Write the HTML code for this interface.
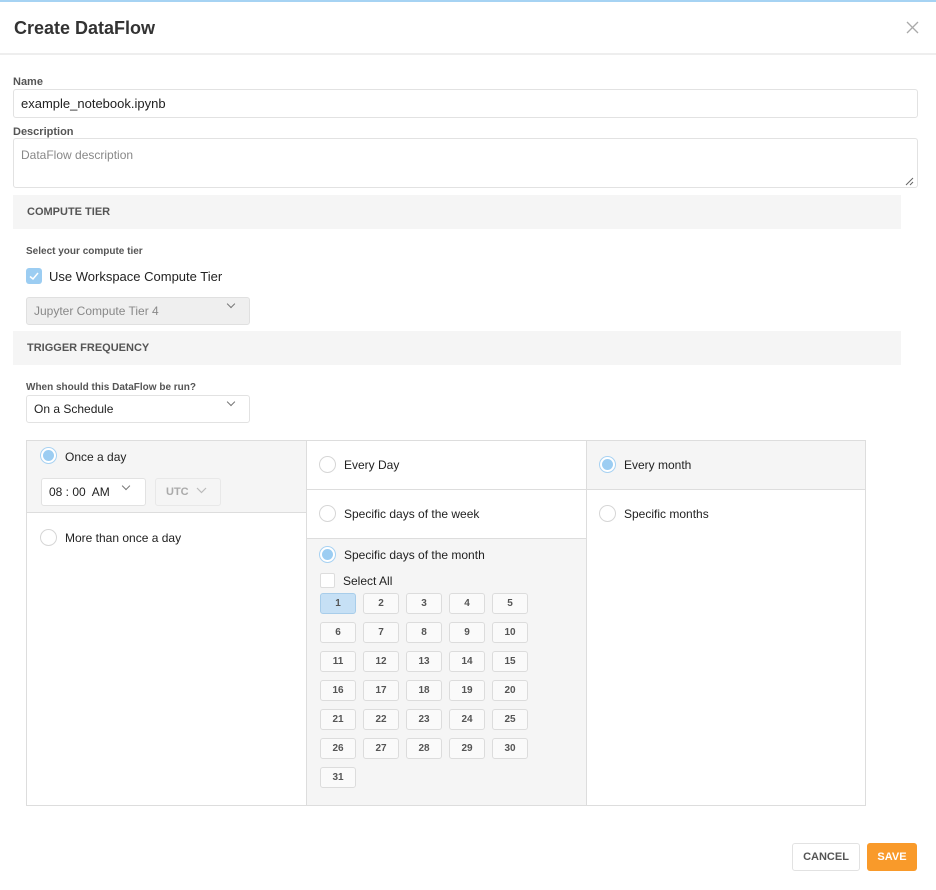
<!DOCTYPE html>
<html><head><meta charset="utf-8">
<style>
*{box-sizing:border-box;margin:0;padding:0}
body{width:936px;height:890px;background:#fff;font-family:"Liberation Sans",Arial,sans-serif;color:#222;position:relative;overflow:hidden}
.a{position:absolute}
.lbl{font-size:11px;font-weight:bold;color:#555}
.inp{border:1px solid #e2e2e2;border-radius:3px;background:#fff}
.sec{background:#f5f5f5;font-size:11px;font-weight:bold;color:#555;padding-left:14px;line-height:34px}
.t13{font-size:13px;color:#222}
.radio{width:17px;height:17px;border-radius:50%;border:1px solid #d6d6d6;background:#fff}
.radio.on{border-color:#a8d2f2}
.radio.on::after{content:"";position:absolute;left:2px;top:2px;width:11px;height:11px;border-radius:50%;background:#9ccdf2}
.chev{width:6px;height:6px;border-right:1px solid #777;border-bottom:1px solid #777;transform:rotate(45deg)}
.d{position:absolute;width:36px;height:21px;border:1px solid #dcdcdc;border-radius:3px;background:#fafafa;font-size:10px;font-weight:bold;color:#555;text-align:center;line-height:19px}
.d.on{background:#c6e0f5;border-color:#a8cdea}
</style></head><body>
<div class="a" style="left:0;top:0;width:936px;height:2px;background:#a6d3f3"></div>
<div class="a" style="left:14px;top:18px;font-size:18px;font-weight:bold;color:#333">Create DataFlow</div>
<svg class="a" style="left:906px;top:21px" width="13" height="13"><path d="M1 1L12 12M12 1L1 12" stroke="#aaa" stroke-width="1.3"/></svg>
<div class="a" style="left:0;top:53px;width:936px;height:2px;background:#eee"></div>

<div class="a lbl" style="left:13px;top:76px">Name</div>
<div class="a inp" style="left:13px;top:89px;width:905px;height:29px"></div>
<div class="a t13" style="left:21px;top:96px">example_notebook.ipynb</div>
<div class="a lbl" style="left:13px;top:126px">Description</div>
<div class="a inp" style="left:13px;top:138px;width:905px;height:50px"></div>
<div class="a" style="left:21px;top:148px;font-size:12px;color:#888">DataFlow description</div>
<svg class="a" style="left:904px;top:176px" width="10" height="10"><path d="M2 9L9 2M6 9L9 6" stroke="#666" stroke-width="1"/></svg>

<div class="a sec" style="left:13px;top:195px;width:888px;height:34px">COMPUTE TIER</div>
<div class="a lbl" style="left:26px;top:246px;font-size:10px">Select your compute tier</div>
<div class="a" style="left:26px;top:268px;width:16px;height:16px;border-radius:3px;background:#9ccdf2"></div>
<svg class="a" style="left:26px;top:268px" width="16" height="16"><path d="M4 8.5L7 11L12 5" stroke="#fff" stroke-width="1.5" fill="none"/></svg>
<div class="a t13" style="left:49px;top:269px">Use Workspace Compute Tier</div>
<div class="a" style="left:26px;top:297px;width:224px;height:28px;background:#efefef;border:1px solid #e0e0e0;border-radius:3px"></div>
<div class="a" style="left:34px;top:304px;font-size:12px;color:#888">Jupyter Compute Tier 4</div>
<div class="a chev" style="left:228px;top:301px"></div>

<div class="a sec" style="left:13px;top:331px;width:888px;height:34px">TRIGGER FREQUENCY</div>
<div class="a lbl" style="left:26px;top:382px;font-size:10px">When should this DataFlow be run?</div>
<div class="a inp" style="left:26px;top:395px;width:224px;height:28px"></div>
<div class="a" style="left:34px;top:402px;font-size:12px;color:#222">On a Schedule</div>
<div class="a chev" style="left:228px;top:399px"></div>

<div class="a" style="left:26px;top:440px;width:840px;height:366px;border:1px solid #ddd"></div>
<div class="a" style="left:27px;top:441px;width:279px;height:72px;background:#f5f5f5;border-bottom:1px solid #ddd"></div>
<div class="a" style="left:306px;top:440px;width:1px;height:366px;background:#ddd"></div>
<div class="a" style="left:586px;top:440px;width:1px;height:366px;background:#ddd"></div>
<div class="a" style="left:307px;top:489px;width:279px;height:1px;background:#ddd"></div>
<div class="a" style="left:307px;top:538px;width:279px;height:267px;background:#f5f5f5;border-top:1px solid #ddd"></div>
<div class="a" style="left:587px;top:441px;width:278px;height:49px;background:#f5f5f5;border-bottom:1px solid #ddd"></div>

<div class="a radio on" style="left:40px;top:447px"></div>
<div class="a t13" style="left:65px;top:450px;font-size:12px">Once a day</div>
<div class="a" style="left:41px;top:478px;width:105px;height:28px;background:#fff;border:1px solid #e2e2e2;border-radius:3px"></div>
<div class="a" style="left:49px;top:485px;font-size:12px">08 : 00&nbsp; AM</div>
<div class="a chev" style="left:123px;top:483px"></div>
<div class="a" style="left:155px;top:478px;width:66px;height:28px;border:1px solid #e8e8e8;border-radius:3px"></div>
<div class="a" style="left:166px;top:486px;font-size:11px;color:#aaa;font-weight:bold">UTC</div>
<svg class="a" style="left:196px;top:487px" width="11" height="7"><path d="M1 1L5.5 5.5L10 1" stroke="#bbb" stroke-width="1.2" fill="none"/></svg>
<div class="a radio" style="left:40px;top:529px"></div>
<div class="a t13" style="left:65px;top:531px;font-size:12px">More than once a day</div>

<div class="a radio" style="left:319px;top:456px"></div>
<div class="a t13" style="left:344px;top:458px;font-size:12px">Every Day</div>
<div class="a radio" style="left:319px;top:505px"></div>
<div class="a t13" style="left:344px;top:507px;font-size:12px">Specific days of the week</div>
<div class="a radio on" style="left:319px;top:546px"></div>
<div class="a t13" style="left:344px;top:548px;font-size:12px">Specific days of the month</div>
<div class="a" style="left:320px;top:573px;width:15px;height:15px;border:1px solid #ddd;background:#fff;border-radius:2px"></div>
<div class="a t13" style="left:343px;top:574px;font-size:12px">Select All</div>

<div class="a radio on" style="left:599px;top:456px"></div>
<div class="a t13" style="left:624px;top:458px;font-size:12px">Every month</div>
<div class="a radio" style="left:599px;top:505px"></div>
<div class="a t13" style="left:624px;top:507px;font-size:12px">Specific months</div>

<div class="d on" style="left:320px;top:593px">1</div><div class="d" style="left:363px;top:593px">2</div><div class="d" style="left:406px;top:593px">3</div><div class="d" style="left:449px;top:593px">4</div><div class="d" style="left:492px;top:593px">5</div>
<div class="d" style="left:320px;top:622px">6</div><div class="d" style="left:363px;top:622px">7</div><div class="d" style="left:406px;top:622px">8</div><div class="d" style="left:449px;top:622px">9</div><div class="d" style="left:492px;top:622px">10</div>
<div class="d" style="left:320px;top:651px">11</div><div class="d" style="left:363px;top:651px">12</div><div class="d" style="left:406px;top:651px">13</div><div class="d" style="left:449px;top:651px">14</div><div class="d" style="left:492px;top:651px">15</div>
<div class="d" style="left:320px;top:680px">16</div><div class="d" style="left:363px;top:680px">17</div><div class="d" style="left:406px;top:680px">18</div><div class="d" style="left:449px;top:680px">19</div><div class="d" style="left:492px;top:680px">20</div>
<div class="d" style="left:320px;top:709px">21</div><div class="d" style="left:363px;top:709px">22</div><div class="d" style="left:406px;top:709px">23</div><div class="d" style="left:449px;top:709px">24</div><div class="d" style="left:492px;top:709px">25</div>
<div class="d" style="left:320px;top:738px">26</div><div class="d" style="left:363px;top:738px">27</div><div class="d" style="left:406px;top:738px">28</div><div class="d" style="left:449px;top:738px">29</div><div class="d" style="left:492px;top:738px">30</div>
<div class="d" style="left:320px;top:767px">31</div>

<div class="a" style="left:792px;top:843px;width:68px;height:28px;border:1px solid #e2e2e2;border-radius:3px;font-size:11px;font-weight:bold;color:#555;text-align:center;line-height:26px">CANCEL</div>
<div class="a" style="left:867px;top:843px;width:50px;height:28px;background:#f99a2a;border-radius:3px;font-size:11px;font-weight:bold;color:#fff;text-align:center;line-height:28px">SAVE</div>
</body></html>
